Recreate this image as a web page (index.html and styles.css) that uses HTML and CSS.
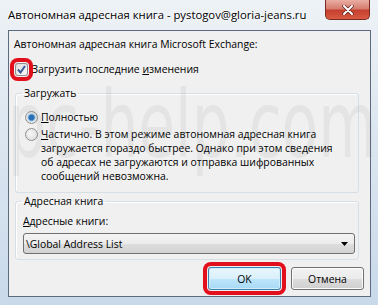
FILE: index.html
```html
<!DOCTYPE html>
<html>
    <head>
        <meta charset="utf-8">
        <title>Автономная адресная книга</title>
        <link rel="stylesheet" href="styles.css">
    </head>
    <body>
        <div id="window">
            <div id="titlebar">
                <span id="title">Автономная адресная книга - pystogov@gloria-jeans.ru</span>
                <button id="close">
                    <svg width="12" height="10" viewBox="0 0 12 10">
                        <path d="M2 1 L10 9 M10 1 L2 9" stroke="#5a2020" stroke-width="3.4" stroke-linecap="round"/>
                        <path d="M2 1 L10 9 M10 1 L2 9" stroke="#fff" stroke-width="2" stroke-linecap="round"/>
                    </svg>
                </button>
            </div>
            <div id="client">
                <p id="intro">Автономная адресная книга Microsoft Exchange:</p>
                <div class="check-row">
                    <span class="checkbox marked">
                        <svg width="9" height="9" viewBox="0 0 9 9">
                            <path d="M1 4.5 L3.5 7.5 L8 1" fill="none" stroke="#3a5a9a" stroke-width="2"/>
                        </svg>
                    </span>
                    <span>Загрузить последние <u>и</u>зменения</span>
                </div>

                <fieldset class="group" id="loadGroup">
                    <legend>Загружать</legend>
                    <div class="radio-row">
                        <span class="radio on"></span>
                        <span><u>П</u>олностью</span>
                    </div>
                    <div class="radio-row">
                        <span class="radio"></span>
                        <span class="radio-text"><u>Ч</u>астично. В этом режиме автономная адресная книга<br>загружается гораздо быстрее. Однако при этом сведения<br>об адресах не загружаются и отправка шифрованных<br>сообщений невозможна.</span>
                    </div>
                </fieldset>

                <fieldset class="group" id="bookGroup">
                    <legend>Адресная книга</legend>
                    <div class="field-label"><u>А</u>дресные книги:</div>
                    <div class="select">
                        <span>\Global Address List</span>
                        <svg width="7" height="4" viewBox="0 0 7 4"><path d="M0 0 H7 L3.5 4 Z" fill="#000"/></svg>
                    </div>
                </fieldset>

                <div class="buttons">
                    <button class="btn default marked">OK</button>
                    <button class="btn">Отмена</button>
                </div>
            </div>
            <div id="watermark">pc-help.com</div>
        </div>
    </body>
</html>
```

FILE: styles.css
```css
body { margin: 0; font-family: "Open Sans", "Noto Sans", sans-serif; font-size: 10.4px; color: #000; }

#window {
    position: relative;
    width: 378px;
    height: 305px;
    box-sizing: border-box;
    padding: 0 7px 8px 8px;
    background: linear-gradient(180deg, #eef2f6 0%, #dde7f1 40%, #c9d9ea 100%);
    overflow: hidden;
    display: flex;
    flex-direction: column;
}

#titlebar {
    height: 30px;
    display: flex;
    align-items: flex-start;
    justify-content: space-between;
}

#title {
    margin-top: 7px;
    font-size: 11.3px;
    text-shadow: 0 0 6px #fff, 0 0 3px #fff;
}

#close {
    width: 45px;
    height: 20px;
    margin-right: 1px;
    padding: 0;
    border: 1px solid #7a2a22;
    border-top: none;
    border-radius: 0 0 5px 5px;
    background: linear-gradient(180deg, #e9aea4 0%, #d77e70 45%, #c4412f 55%, #d85a42 100%);
    display: flex;
    align-items: center;
    justify-content: center;
}

#client {
    flex: 1;
    border: 1px solid #5c6c7e;
    background-color: #f0f0f0;
    padding: 0 6px 0 6px;
    display: flex;
    flex-direction: column;
}

#intro {
    margin: 6px 0 0 -1px;
    line-height: 15px;
}

.check-row {
    display: flex;
    align-items: center;
    gap: 4px;
    margin-top: 10px;
    line-height: 15px;
}

.checkbox {
    width: 11px;
    height: 11px;
    border: 1px solid #8e8f8f;
    background: linear-gradient(135deg, #dcdcdc, #fbfbfb);
    display: flex;
    align-items: center;
    justify-content: center;
    border-radius: 1px;
}

/* red highlight drawn over the screenshot */
.marked {
    box-shadow: 0 0 0 1px #f0f0f0, 0 0 0 5px #e2101c;
    border-radius: 3px;
}

.group {
    margin: 0 5px 0 0;
    padding: 0 3px 0 7px;
    border: 1px solid #d5dfe5;
    border-radius: 3px;
    box-shadow: inset 1px 1px 0 #fff;
}

.group legend {
    padding: 0 2px;
    margin-left: -1px;
    line-height: 15px;
}

#loadGroup {
    margin-top: 9px;
    padding-bottom: 9px;
}

#bookGroup {
    margin-top: 1px;
    padding-bottom: 5px;
}

.radio-row {
    display: flex;
    align-items: flex-start;
    gap: 3px;
    line-height: 14px;
}

.radio-row:first-of-type { margin-top: 9px; }
.radio-row + .radio-row { margin-top: 3px; }

.radio {
    flex: none;
    width: 11px;
    height: 11px;
    margin: 1px 0 0 2px;
    border: 1px solid #8e8f8f;
    border-radius: 50%;
    background: radial-gradient(circle at 40% 40%, #f6f6f6, #d8d8d8);
}

.radio.on {
    background: radial-gradient(circle, #2a6fb4 0 2.5px, #8fc0e6 3.5px, #eaeaea 4.5px, #d6d6d6);
}

.radio-text { white-space: nowrap; }

.field-label {
    margin-top: 5px;
    line-height: 15px;
}

.select {
    margin-top: 4px;
    height: 19px;
    border: 1px solid #707070;
    border-radius: 3px;
    background: linear-gradient(180deg, #f4f4f4 0%, #ececec 50%, #dedede 51%, #d2d2d2 100%);
    display: flex;
    align-items: center;
    justify-content: space-between;
    padding: 0 6px 0 2px;
}

.buttons {
    margin-top: auto;
    margin-bottom: 6px;
    display: flex;
    justify-content: flex-end;
    gap: 10px;
}

.btn {
    width: 73px;
    height: 23px;
    font: inherit;
    border: 1px solid #707070;
    border-radius: 3px;
    background: linear-gradient(180deg, #f2f2f2 0%, #ebebeb 50%, #dddddd 51%, #cfcfcf 100%);
    box-shadow: inset 0 0 0 1px #fcfcfc;
}

.btn.default {
    border-color: #3c7fb1;
    background: linear-gradient(180deg, #eaf6fd 0%, #d9f0fc 50%, #bee6fd 51%, #a7d9f5 100%);
    box-shadow: inset 0 0 0 1px #d0eefc, 0 0 0 1px #f0f0f0, 0 0 0 5px #e2101c;
}

/* site watermark over the whole screenshot */
#watermark {
    position: absolute;
    left: 8px;
    top: 80px;
    font-family: "DejaVu Sans", sans-serif;
    font-size: 92px;
    line-height: 1;
    transform: scaleX(0.65);
    transform-origin: left top;
    color: rgba(90, 90, 90, 0.08);
    pointer-events: none;
    white-space: nowrap;
}
```
